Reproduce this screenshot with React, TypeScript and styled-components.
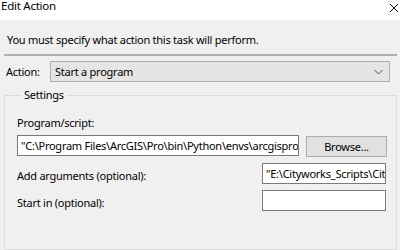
import React from "react";
import styled, { createGlobalStyle } from "styled-components";

const Global = createGlobalStyle`
  html, body { margin: 0; padding: 0; }
  body {
    width: 400px;
    height: 250px;
    overflow: hidden;
    background: #f0f0f0;
    font-family: "Noto Sans", "Open Sans", sans-serif;
    font-size: 11px;
    letter-spacing: -0.25px;
    color: #000;
  }
`;

const Window = styled.div`
  width: 400px;
  height: 250px;
  display: flex;
  flex-direction: column;
  overflow: hidden;
`;

const TitleBar = styled.div`
  height: 20px;
  background: #fff;
  display: flex;
  align-items: flex-start;
  justify-content: space-between;
`;

const Title = styled.div`
  font-size: 11.5px;
  line-height: 12px;
  padding-left: 1px;
`;

const Close = styled.div`
  width: 10px;
  height: 10px;
  margin-right: 1px;
  margin-top: 1px;
`;

const Body = styled.div`
  display: flex;
  flex-direction: column;
  padding-top: 12px;
`;

const Instruction = styled.div`
  line-height: 16px;
  padding-left: 7px;
`;

const Separator = styled.div`
  height: 2px;
  margin: 6px 3px 0 4px;
  background: #b0b0b0;
`;

const ActionRow = styled.div`
  display: flex;
  align-items: center;
  margin-top: 5px;
  height: 21px;
  padding-left: 6px;
`;

const ActionLabel = styled.div`
  width: 44px;
  line-height: 16px;
`;

const Combo = styled.div`
  width: 340px;
  height: 21px;
  box-sizing: border-box;
  background: #e5e5e5;
  border: 1px solid #adadad;
  display: flex;
  align-items: center;
  justify-content: space-between;
  padding: 0 6px 0 4px;
`;

const Group = styled.fieldset`
  margin: 5px 3px 0 4px;
  padding: 12px 0 0 12px;
  border: 1px solid #dcdcdc;
  min-width: 0;
  flex: 1;
  display: flex;
  flex-direction: column;
`;

const Legend = styled.legend`
  padding: 0 3px;
  margin-left: 4px;
  line-height: 16px;
`;

const FieldLabel = styled.div`
  line-height: 16px;
`;

const ProgRow = styled.div`
  display: flex;
  align-items: flex-start;
  gap: 7px;
  margin-top: 4px;
`;

const TextBox = styled.div<{ $w: number }>`
  width: ${(p) => p.$w}px;
  height: 21px;
  box-sizing: border-box;
  background: #fff;
  border: 1px solid #7a7a7a;
  padding: 0 3px;
  line-height: 19px;
  white-space: nowrap;
  overflow: hidden;
`;

const Button = styled.div`
  width: 81px;
  height: 21px;
  margin-top: 1px;
  box-sizing: border-box;
  background: #e1e1e1;
  border: 1px solid #adadad;
  display: flex;
  align-items: center;
  justify-content: center;
`;

const FieldRow = styled.div`
  display: flex;
  align-items: center;
  justify-content: space-between;
  padding-right: 10px;
  margin-top: 6px;
`;

const RowLabel = styled.div`
  line-height: 16px;
  padding-top: 4px;
`;

export default function App() {
  return (
    <Window>
      <Global />
      <TitleBar>
        <Title>Edit Action</Title>
        <Close>
          <svg width="10" height="10" viewBox="0 0 10 10">
            <path d="M1 1 L9 9 M9 1 L1 9" stroke="#000" strokeWidth="1" fill="none" />
          </svg>
        </Close>
      </TitleBar>
      <Body>
        <Instruction>You must specify what action this task will perform.</Instruction>
        <Separator />
        <ActionRow>
          <ActionLabel>Action:</ActionLabel>
          <Combo>
            <span>Start a program</span>
            <svg width="9" height="6" viewBox="0 0 9 6">
              <path d="M0.5 1 L4.5 5 L8.5 1" stroke="#555" strokeWidth="1" fill="none" />
            </svg>
          </Combo>
        </ActionRow>
      </Body>
      <Group>
        <Legend>Settings</Legend>
        <FieldLabel>Program/script:</FieldLabel>
        <ProgRow>
          <TextBox $w={282}>"C:\Program Files\ArcGIS\Pro\bin\Python\envs\arcgispro-py3\python.exe"</TextBox>
          <Button>Browse...</Button>
        </ProgRow>
        <FieldRow>
          <RowLabel>Add arguments (optional):</RowLabel>
          <TextBox $w={124}>"E:\Cityworks_Scripts\Cityworks.py"</TextBox>
        </FieldRow>
        <FieldRow>
          <RowLabel>Start in (optional):</RowLabel>
          <TextBox $w={124}></TextBox>
        </FieldRow>
      </Group>
    </Window>
  );
}
